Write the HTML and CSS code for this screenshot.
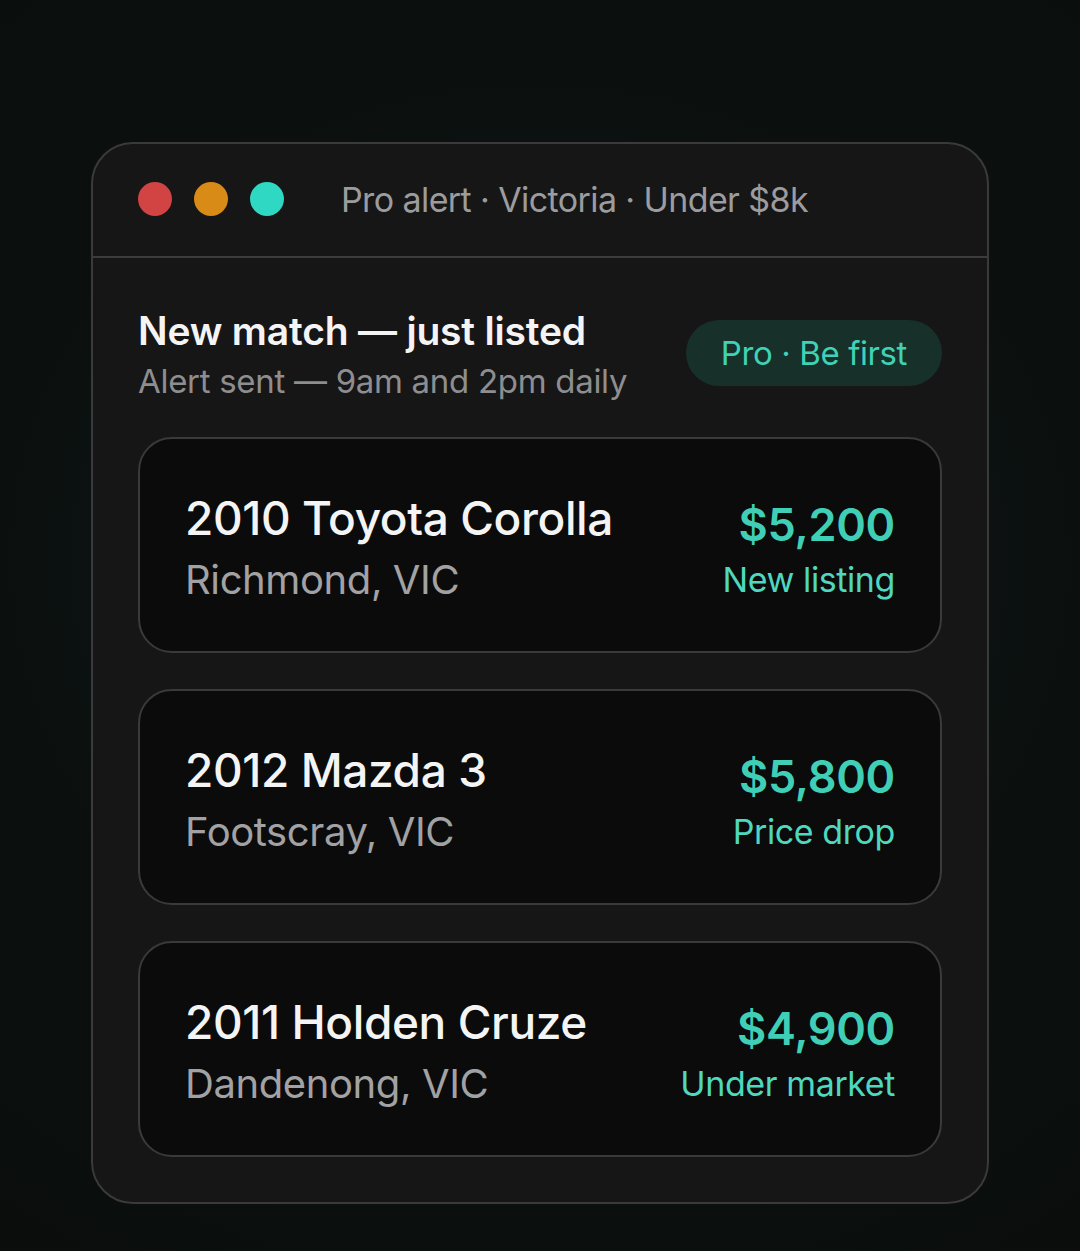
FILE: index.html
```html
<!DOCTYPE html>
<html>
<head>
<meta charset="utf-8">
<link rel="stylesheet" href="styles.css">
</head>
<body>
<div class="page">
  <div class="window">
    <div class="titlebar">
      <div class="dots">
        <span class="dot red"></span>
        <span class="dot orange"></span>
        <span class="dot teal"></span>
      </div>
      <div class="wtitle">Pro alert · Victoria · Under $8k</div>
    </div>
    <div class="body">
      <div class="head">
        <div class="head-text">
          <div class="h1">New match — just listed</div>
          <div class="h2">Alert sent — 9am and 2pm daily</div>
        </div>
        <div class="badge">Pro · Be first</div>
      </div>
      <div class="cards">
        <div class="card">
          <div class="left">
            <div class="car">2010 Toyota Corolla</div>
            <div class="loc">Richmond, VIC</div>
          </div>
          <div class="right">
            <div class="price">$5,200</div>
            <div class="tag">New listing</div>
          </div>
        </div>
        <div class="card">
          <div class="left">
            <div class="car">2012 Mazda 3</div>
            <div class="loc">Footscray, VIC</div>
          </div>
          <div class="right">
            <div class="price">$5,800</div>
            <div class="tag">Price drop</div>
          </div>
        </div>
        <div class="card">
          <div class="left">
            <div class="car">2011 Holden Cruze</div>
            <div class="loc">Dandenong, VIC</div>
          </div>
          <div class="right">
            <div class="price">$4,900</div>
            <div class="tag">Under market</div>
          </div>
        </div>
      </div>
    </div>
  </div>
</div>
</body>
</html>
```

FILE: styles.css
```css
* { box-sizing: border-box; }
html, body { margin: 0; padding: 0; }
body {
  width: 1080px;
  height: 1251px;
  overflow: hidden;
  background: radial-gradient(ellipse 90% 70% at 50% 45%, #0f1614 0%, #0b100f 60%, #0a0d0c 100%);
  font-family: "Inter", "Noto Sans", sans-serif;
}
.page {
  padding-top: 142px;
  display: flex;
  justify-content: center;
}
.window {
  width: 898px;
  height: 1062px;
  background: #161616;
  border: 2px solid #3a3a3a;
  border-radius: 42px;
  overflow: hidden;
}
.titlebar {
  height: 114px;
  border-bottom: 2px solid #3c3c3c;
  display: flex;
  align-items: center;
  padding-left: 45px;
  padding-bottom: 2px;
}
.dots { display: flex; gap: 22px; }
.dot { width: 34px; height: 34px; border-radius: 50%; display: block; }
.red { background: #d24343; }
.orange { background: #d98b17; }
.teal { background: #2fd8c2; }
.wtitle {
  margin-left: 57px;
  color: #9c9c9e;
  font-size: 34px;
  letter-spacing: -0.6px;
}
.body {
  padding: 48px 45px 0 45px;
}
.head {
  display: flex;
  justify-content: space-between;
  align-items: center;
}
.h1 {
  color: #f4f4f4;
  font-size: 39px;
  font-weight: 600;
  letter-spacing: -0.2px;
  line-height: 50px;
}
.h2 {
  color: #8e8e90;
  font-size: 33px;
  line-height: 50px;
  letter-spacing: -0.3px;
}
.badge {
  background: #17302a;
  color: #3fd2b6;
  font-size: 33px;
  height: 66px;
  padding: 0 35px;
  border-radius: 33px;
  display: flex;
  align-items: center;
  letter-spacing: -0.4px;
  margin-top: -6px;
}
.cards {
  margin-top: 31px;
  display: flex;
  flex-direction: column;
  gap: 36px;
}
.card {
  height: 216px;
  background: #0b0b0b;
  border: 2px solid #3a3a3a;
  border-radius: 34px;
  display: flex;
  justify-content: space-between;
  align-items: center;
  padding: 8px 45px 0 45px;
}
.car {
  color: #f4f4f4;
  font-size: 46px;
  font-weight: 500;
  letter-spacing: -0.4px;
  line-height: 62px;
}
.loc {
  color: #a2a2a4;
  font-size: 40px;
  line-height: 62px;
  letter-spacing: -0.4px;
}
.right { text-align: right; }
.price {
  color: #40cfb6;
  font-size: 45px;
  font-weight: 600;
  line-height: 62px;
  letter-spacing: -0.3px;
}
.tag {
  color: #4ed8bf;
  font-size: 34px;
  line-height: 48px;
  letter-spacing: -0.4px;
}
```
